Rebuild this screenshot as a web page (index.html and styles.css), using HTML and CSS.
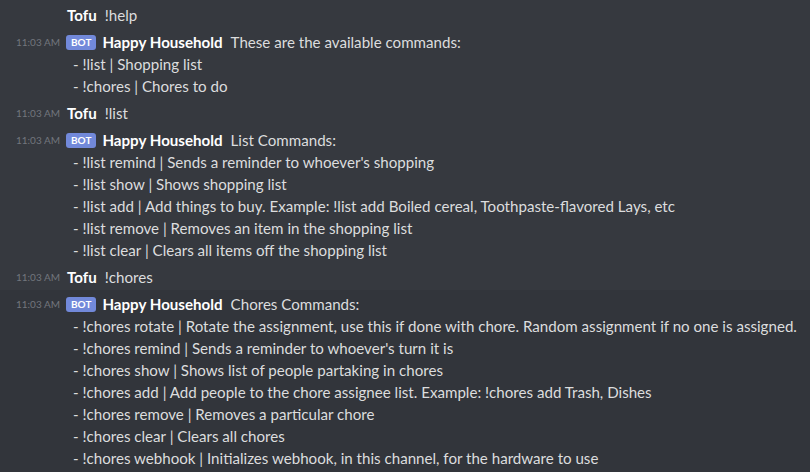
FILE: index.html
```html
<!DOCTYPE html>
<html>
<head>
<meta charset="utf-8">
<link rel="stylesheet" href="styles.css">
</head>
<body>
<div class="chat">
  <div class="msg">
    <div class="head"><span class="time"></span><span class="name">Tofu</span><span class="text">!help</span></div>
  </div>
  <div class="msg">
    <div class="head"><span class="time">11:03 AM</span><span class="bot">BOT</span><span class="name">Happy Household</span><span class="text">These are the available commands:</span></div>
    <div class="line">- !list | Shopping list</div>
    <div class="line">- !chores | Chores to do</div>
  </div>
  <div class="msg">
    <div class="head"><span class="time">11:03 AM</span><span class="name">Tofu</span><span class="text">!list</span></div>
  </div>
  <div class="msg">
    <div class="head"><span class="time">11:03 AM</span><span class="bot">BOT</span><span class="name">Happy Household</span><span class="text">List Commands:</span></div>
    <div class="line">- !list remind | Sends a reminder to whoever's shopping</div>
    <div class="line">- !list show | Shows shopping list</div>
    <div class="line">- !list add | Add things to buy. Example: !list add Boiled cereal, Toothpaste-flavored Lays, etc</div>
    <div class="line">- !list remove | Removes an item in the shopping list</div>
    <div class="line">- !list clear | Clears all items off the shopping list</div>
  </div>
  <div class="msg">
    <div class="head"><span class="time">11:03 AM</span><span class="name">Tofu</span><span class="text">!chores</span></div>
  </div>
  <div class="msg hover">
    <div class="head"><span class="time">11:03 AM</span><span class="bot">BOT</span><span class="name">Happy Household</span><span class="text">Chores Commands:</span></div>
    <div class="line">- !chores rotate | Rotate the assignment, use this if done with chore. Random assignment if no one is assigned.</div>
    <div class="line">- !chores remind | Sends a reminder to whoever's turn it is</div>
    <div class="line">- !chores show | Shows list of people partaking in chores</div>
    <div class="line">- !chores add | Add people to the chore assignee list. Example: !chores add Trash, Dishes</div>
    <div class="line">- !chores remove | Removes a particular chore</div>
    <div class="line">- !chores clear | Clears all chores</div>
    <div class="line">- !chores webhook | Initializes webhook, in this channel, for the hardware to use</div>
  </div>
</div>
</body>
</html>
```
FILE: styles.css
```css
html, body {
  margin: 0;
  padding: 0;
  background: #36393f;
  height: 100%;
  overflow: hidden;
}
body {
  font-family: Lato, "Noto Sans", sans-serif;
  color: #dcddde;
  font-size: 15.12px;
}
.chat {
  padding-top: 1px;
}
.msg {
  padding: 3px 0 2px 0;
}
.msg.hover {
  background: #32353b;
  min-height: 200px;
}
.head {
  display: flex;
  align-items: center;
  height: 22px;
  white-space: nowrap;
}
.time {
  width: 51px;
  padding-left: 16px;
  flex: none;
  font-size: 10px;
  color: #72767d;
}
.bot {
  background: #7289da;
  color: #fff;
  font-size: 10px;
  font-weight: 700;
  height: 15px;
  line-height: 15px;
  padding: 0 5px;
  border-radius: 3px;
  margin-left: -1px;
  margin-right: 6px;
}
.name {
  color: #fff;
  font-weight: 700;
  margin-right: 8px;
}
.line {
  height: 22px;
  line-height: 22px;
  padding-left: 73px;
  white-space: nowrap;
}
```
